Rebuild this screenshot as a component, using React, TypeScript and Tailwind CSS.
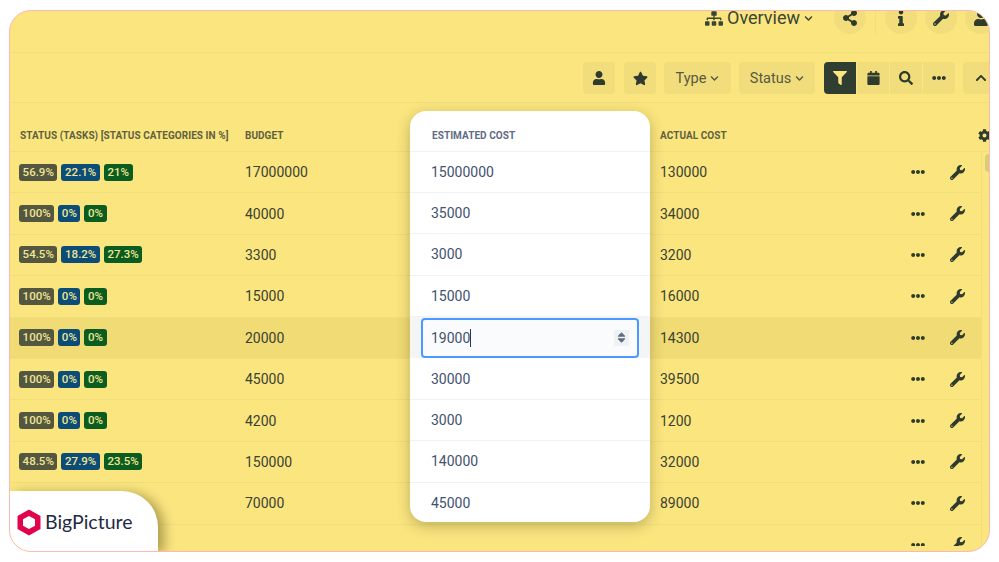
import React from 'react';
import {
  FaSitemap, FaShareAlt, FaInfo, FaWrench, FaUser, FaStar, FaFilter,
  FaCalendar, FaSearch, FaEllipsisH, FaChevronUp, FaChevronDown, FaCog, FaSort,
} from 'react-icons/fa';

const rows = [
  { status: ['56.9%', '22.1%', '21%'], budget: '17000000', estimated: '15000000', actual: '130000' },
  { status: ['100%', '0%', '0%'], budget: '40000', estimated: '35000', actual: '34000' },
  { status: ['54.5%', '18.2%', '27.3%'], budget: '3300', estimated: '3000', actual: '3200' },
  { status: ['100%', '0%', '0%'], budget: '15000', estimated: '15000', actual: '16000' },
  { status: ['100%', '0%', '0%'], budget: '20000', estimated: '19000', actual: '14300', active: true },
  { status: ['100%', '0%', '0%'], budget: '45000', estimated: '30000', actual: '39500' },
  { status: ['100%', '0%', '0%'], budget: '4200', estimated: '3000', actual: '1200' },
  { status: ['48.5%', '27.9%', '23.5%'], budget: '150000', estimated: '140000', actual: '32000' },
  { status: [], budget: '70000', estimated: '45000', actual: '89000' },
  { status: [], budget: '', estimated: '', actual: '' },
];

const badgeColors = ['bg-[#54573f]', 'bg-[#0c4d78]', 'bg-[#0b5c20]'];

const CircleButton = ({ children }: { children: React.ReactNode }) => (
  <div className="w-8 h-8 shrink-0 rounded-full bg-[#f1dd7b] flex items-center justify-center text-[#2f3b2c]">
    {children}
  </div>
);

const Chevron = () => <FaChevronDown className="w-[9px] h-[9px] ml-1" />;

const ToolButton = ({ children, className = '' }: { children: React.ReactNode; className?: string }) => (
  <div className={`h-8 rounded bg-[#f1dd7b] flex items-center justify-center text-[#2f3b2c] ${className}`}>
    {children}
  </div>
);

const App = () => {
  return (
    <div className="w-[999px] h-[562px] bg-white pt-[10px] pl-[9px] overflow-hidden font-['Roboto',sans-serif]">
      <div className="relative w-[981px] h-[542px] rounded-[22px] border border-[#f9b9b4] bg-[#fae57f] overflow-hidden">
        {/* Top bar */}
        <div className="h-[42px] border-b border-[#f0dd7c] flex justify-end items-start">
          <div className="flex items-center text-[#3a4535] text-lg h-[36px] mr-[21px] mt-[-11px]">
            <FaSitemap className="w-[18px] h-[15px] mr-1" />
            <span className="leading-[14px]">Overview</span>
            <Chevron />
          </div>
          <div className="flex items-center gap-2 -mr-[8px] mt-[-9px]">
            <CircleButton><FaShareAlt className="w-4 h-4" /></CircleButton>
            <div className="w-px h-8 bg-[#f0dd7c] mx-[1px]" />
            <CircleButton><FaInfo className="w-4 h-4" /></CircleButton>
            <CircleButton><FaWrench className="w-4 h-4" /></CircleButton>
            <CircleButton><FaUser className="w-4 h-4" /></CircleButton>
          </div>
        </div>

        {/* Toolbar */}
        <div className="h-[50px] border-b border-[#f0dd7c] flex justify-end items-center gap-2 -mr-[10px] pt-px">
          <ToolButton className="w-8"><FaUser className="w-[14px] h-[14px]" /></ToolButton>
          <ToolButton className="w-8 ml-[1px]"><FaStar className="w-[15px] h-[15px]" /></ToolButton>
          <ToolButton className="w-[67px] pt-px text-[14.5px] text-[#565a44]">Type<Chevron /></ToolButton>
          <ToolButton className="w-[76px] pt-px text-[14.5px] text-[#565a44]">Status<Chevron /></ToolButton>
          <div className="flex gap-px ml-[1px]">
            <div className="w-8 h-8 rounded-l bg-[#2f3e30] flex items-center justify-center text-[#fae57f]">
              <FaFilter className="w-[14px] h-[14px]" />
            </div>
            <div className="w-8 h-8 bg-[#f1dd7b] flex items-center justify-center text-[#2f3b2c]">
              <FaCalendar className="w-[13px] h-[14px]" />
            </div>
            <div className="w-8 h-8 bg-[#f1dd7b] flex items-center justify-center text-[#2f3b2c]">
              <FaSearch className="w-[14px] h-[14px]" />
            </div>
            <div className="w-8 h-8 rounded-r bg-[#f1dd7b] flex items-center justify-center text-[#2f3b2c]">
              <FaEllipsisH className="w-[14px] h-[14px]" />
            </div>
          </div>
          <ToolButton className="w-[36px]"><FaChevronUp className="w-3 h-3" /></ToolButton>
        </div>

        {/* Table header */}
        <div className="h-[49px] border-b border-[#f0dd7c] flex items-center pt-[17px] text-[10px] font-bold uppercase tracking-[0.05px] text-[#5f6240]">
          <div className="w-[235px] pl-[10px] shrink-0 whitespace-nowrap">Status (Tasks) [Status Categories in %]</div>
          <div className="w-[415px] shrink-0">Budget</div>
          <div className="flex-1">Actual Cost</div>
          <FaCog className="w-[13px] h-[13px] text-[#2f3b2c] mr-[-2px]" />
        </div>

        {/* Table rows */}
        <div className="h-[394px] overflow-hidden flex">
          <div className="w-[972px] shrink-0 border-r border-[#f0dd7c]">
            {rows.map((row, index) => (
              <div
                key={index}
                className={`h-[41.4px] border-b border-[#f0dd7c] flex items-center text-sm text-[#3a4232] ${row.active ? 'bg-[#f0db74]' : ''}`}
              >
                <div className="w-[235px] pl-[9px] shrink-0 flex gap-1">
                  {row.status.map((value, i) => (
                    <span key={i} className={`h-[17px] px-[3.6px] rounded-[3px] text-[11.5px] leading-[17px] font-medium text-[#f0e594] ${badgeColors[i]}`}>
                      {value}
                    </span>
                  ))}
                </div>
                <div className="w-[415px] shrink-0">{row.budget}</div>
                <div className="flex-1">{row.actual}</div>
                <FaEllipsisH className="w-[14px] h-[14px] text-[#2f3b2c] mr-[25px]" />
                <FaWrench className="w-[15px] h-[15px] text-[#2f3b2c] mr-[16px]" />
              </div>
            ))}
          </div>
          <div className="flex-1 pt-[2px] pl-[3px]">
            <div className="w-[5px] h-[18px] rounded-l-sm bg-[#d9cb7c]" />
          </div>
        </div>

        {/* Estimated cost column lifted over the table */}
        <div className="absolute left-[400px] top-[100px] w-[240px] h-[411px] rounded-2xl bg-white shadow-[0_4px_14px_rgba(60,50,0,0.3)] overflow-hidden">
          <div className="h-[40.5px] border-b border-[#f0f2f4] pl-[22px] pt-[19px] text-[10px] leading-[11px] font-bold uppercase tracking-[0.05px] text-[#5e6c84]">
            Estimated Cost
          </div>
          {rows.slice(0, 9).map((row, index) =>
            row.active ? (
              <div key={index} className="h-[41.4px] bg-[#f4f5f7] flex items-center justify-center">
                <div className="w-[218px] h-[40px] rounded border-2 border-[#4c9aff] bg-[#fafbfc] flex items-center justify-between pl-2 pr-[8px] text-sm text-[#42526e]">
                  <span className="border-r border-[#253858] leading-[18px]">{row.estimated}</span>
                  <span className="w-[15px] h-[16px] bg-[#f0f1f3] flex items-center justify-center text-[#5e6c84]">
                    <FaSort className="w-[13px] h-[13px]" />
                  </span>
                </div>
              </div>
            ) : (
              <div key={index} className="h-[41.4px] border-b border-[#f0f2f4] pl-[21px] flex items-center text-sm text-[#42526e]">
                {row.estimated}
              </div>
            )
          )}
        </div>

        {/* Logo tab */}
        <div className="absolute left-0 bottom-0 w-[148px] h-[60px] rounded-tr-[36px] bg-white shadow-[6px_2px_12px_rgba(60,50,0,0.4)] flex items-center pl-[7px] pt-[2px] gap-[4px]">
          <svg width="24" height="27" viewBox="0 0 24 27">
            <path fillRule="evenodd" fill="#e0044f" d="M12 0.5 L23.5 7 V20 L12 26.5 L0.5 20 V7 Z M12 7 L6 10.3 V16.7 L12 20 L18 16.7 V10.3 Z" />
          </svg>
          <span className="text-[19.5px] text-[#1f2a44] font-['Lato',sans-serif]">BigPicture</span>
        </div>
      </div>
    </div>
  );
};

export default App;
